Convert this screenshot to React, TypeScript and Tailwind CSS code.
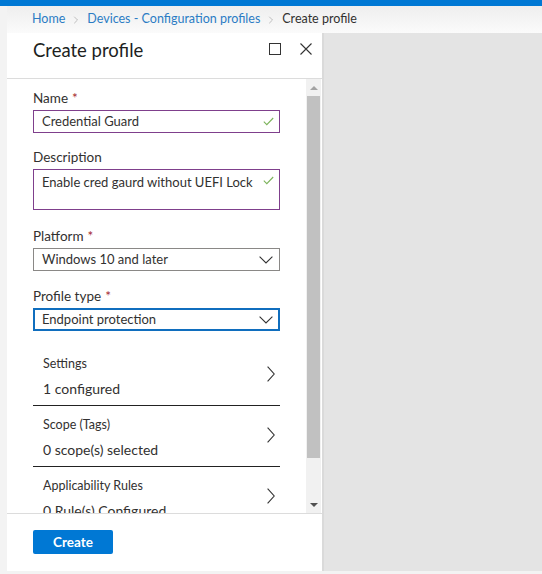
import { ChevronRight } from "lucide-react";

const font = { fontFamily: '"Segoe UI", Lato, "Noto Sans", sans-serif' };

function Label({ text, required }: { text: string; required?: boolean }) {
  return (
    <div className="text-[13.5px] leading-[18px] text-[#323130]">
      {text}
      {required && <span className="ml-1 text-[#a4262c]">*</span>}
    </div>
  );
}

function Tick() {
  return (
    <svg width="11" height="9" viewBox="0 0 11 9" className="shrink-0">
      <path d="M0.8 4.6 L3.8 7.6 L10.2 1" fill="none" stroke="#7cb35b" strokeWidth="1.1" />
    </svg>
  );
}

function Caret() {
  return (
    <svg width="14" height="8" viewBox="0 0 14 8" className="shrink-0">
      <path d="M0.6 0.6 L7 7 L13.4 0.6" fill="none" stroke="#333" strokeWidth="1.1" />
    </svg>
  );
}

function NavRow({ title, value, cut }: { title: string; value: string; cut?: boolean }) {
  return (
    <div
      className={
        "flex h-[61px] shrink-0 items-start justify-between pl-[10px] pr-[5px] pt-[11px] " +
        (cut ? "" : "border-b border-[#222]")
      }
    >
      <div className="flex flex-col">
        <span className="text-[12.5px] leading-[16px] text-[#323130]">{title}</span>
        <span className="mt-[8px] whitespace-nowrap text-[14px] leading-[18px] text-[#323130]">{value}</span>
      </div>
      <svg width="8" height="16" viewBox="0 0 8 16" className="mt-[10px] shrink-0">
        <path d="M0.6 0.6 L7.2 8 L0.6 15.4" fill="none" stroke="#333" strokeWidth="1.1" />
      </svg>
    </div>
  );
}

export default function App() {
  return (
    <div className="flex h-[574px] w-[542px] flex-col overflow-hidden bg-[#f3f3f3]" style={font}>
      <div className="h-[6px] shrink-0 bg-[#0078d4]" />
      <div className="flex min-h-0 flex-1 pb-[3px]">
        <div className="w-[7px] shrink-0 bg-[#f3f3f3]" />
        <div className="flex min-h-0 flex-1 flex-col">
          <div className="flex h-[27px] shrink-0 items-center bg-gradient-to-b from-[#eeeeee] to-[#fbfbfb] pl-[25px] text-[12.5px] text-[#323130]">
            <span className="text-[#2b7cc4]">Home</span>
            <ChevronRight size={12} strokeWidth={1.2} className="mx-[5px] text-[#999]" />
            <span className="text-[#2b7cc4]">Devices - Configuration profiles</span>
            <ChevronRight size={12} strokeWidth={1.2} className="mx-[5px] text-[#999]" />
            <span>Create profile</span>
          </div>
          <div className="flex min-h-0 flex-1">
            <div className="flex w-[315px] shrink-0 flex-col bg-white">
              <div className="flex h-[46px] shrink-0 items-start justify-between border-b border-[#dcdcdc] pl-[26px] pr-[10px] pt-[5px]">
                <span className="text-[18.5px] leading-[24px] text-[#201f1e]">Create profile</span>
                <div className="mt-[5px] flex items-center gap-[19px]">
                  <div className="ml-[2px] h-[12px] w-[12px] border border-[#333]" />
                  <svg width="12" height="12" viewBox="0 0 12 12">
                    <path d="M0.5 0.5 L11.5 11.5 M11.5 0.5 L0.5 11.5" stroke="#333" strokeWidth="1.1" />
                  </svg>
                </div>
              </div>
              <div className="flex min-h-0 flex-1">
                <div className="flex min-h-0 flex-1 flex-col overflow-hidden pl-[26px] pr-[26px] pt-[10px]">
                  <Label text="Name" required />
                  <div className="mt-[3px] flex h-[23px] shrink-0 items-center justify-between border border-[#7f3f8c] pl-[8px] pr-[5px]">
                    <span className="whitespace-nowrap text-[13px] text-[#323130]">Credential Guard</span>
                    <Tick />
                  </div>

                  <div className="mt-[15px]">
                    <Label text="Description" />
                  </div>
                  <div className="mt-[3px] flex h-[41px] shrink-0 items-start justify-between border border-[#7f3f8c] pl-[8px] pr-[5px] pt-[3px]">
                    <span className="whitespace-nowrap text-[13px] leading-[18px] text-[#323130]">Enable cred gaurd without UEFI Lock</span>
                    <div className="mt-[3px]">
                      <Tick />
                    </div>
                  </div>

                  <div className="mt-[17px]">
                    <Label text="Platform" required />
                  </div>
                  <div className="mt-[3px] flex h-[23px] shrink-0 items-center justify-between border border-[#8a8886] pl-[8px] pr-[6px]">
                    <span className="whitespace-nowrap text-[13px] text-[#323130]">Windows 10 and later</span>
                    <Caret />
                  </div>

                  <div className="mt-[16px]">
                    <Label text="Profile type" required />
                  </div>
                  <div className="mt-[3px] flex h-[23px] shrink-0 items-center justify-between border-2 border-[#106ebe] pl-[7px] pr-[5px]">
                    <span className="whitespace-nowrap text-[13px] text-[#323130]">Endpoint protection</span>
                    <Caret />
                  </div>

                  <div className="mt-[14px] flex shrink-0 flex-col">
                    <NavRow title="Settings" value="1 configured" />
                    <NavRow title="Scope (Tags)" value="0 scope(s) selected" />
                    <NavRow title="Applicability Rules" value="0 Rule(s) Configured" cut />
                  </div>
                </div>
                <div className="mr-[1px] flex w-[15px] shrink-0 flex-col items-center bg-[#f1f1f1]">
                  <div className="flex h-[17px] shrink-0 items-center justify-center">
                    <div className="h-0 w-0 border-x-[4px] border-b-[4px] border-x-transparent border-b-[#a3a3a3]" />
                  </div>
                  <div className="h-[362px] w-[13px] shrink-0 bg-[#c1c1c1]" />
                  <div className="flex-1" />
                  <div className="flex h-[17px] shrink-0 items-center justify-center">
                    <div className="h-0 w-0 border-x-[4px] border-t-[4px] border-x-transparent border-t-[#505050]" />
                  </div>
                </div>
              </div>
              <div className="h-[58px] shrink-0 border-t border-[#dcdcdc] pl-[26px] pt-[16px]">
                <button className="block h-[24px] w-[80px] rounded-[2px] bg-[#0078d4] text-[13.5px] font-bold text-white">
                  Create
                </button>
              </div>
            </div>
            <div className="flex-1 border-l-2 border-[#dadada] bg-[#e4e4e4]" />
          </div>
        </div>
      </div>
    </div>
  );
}
